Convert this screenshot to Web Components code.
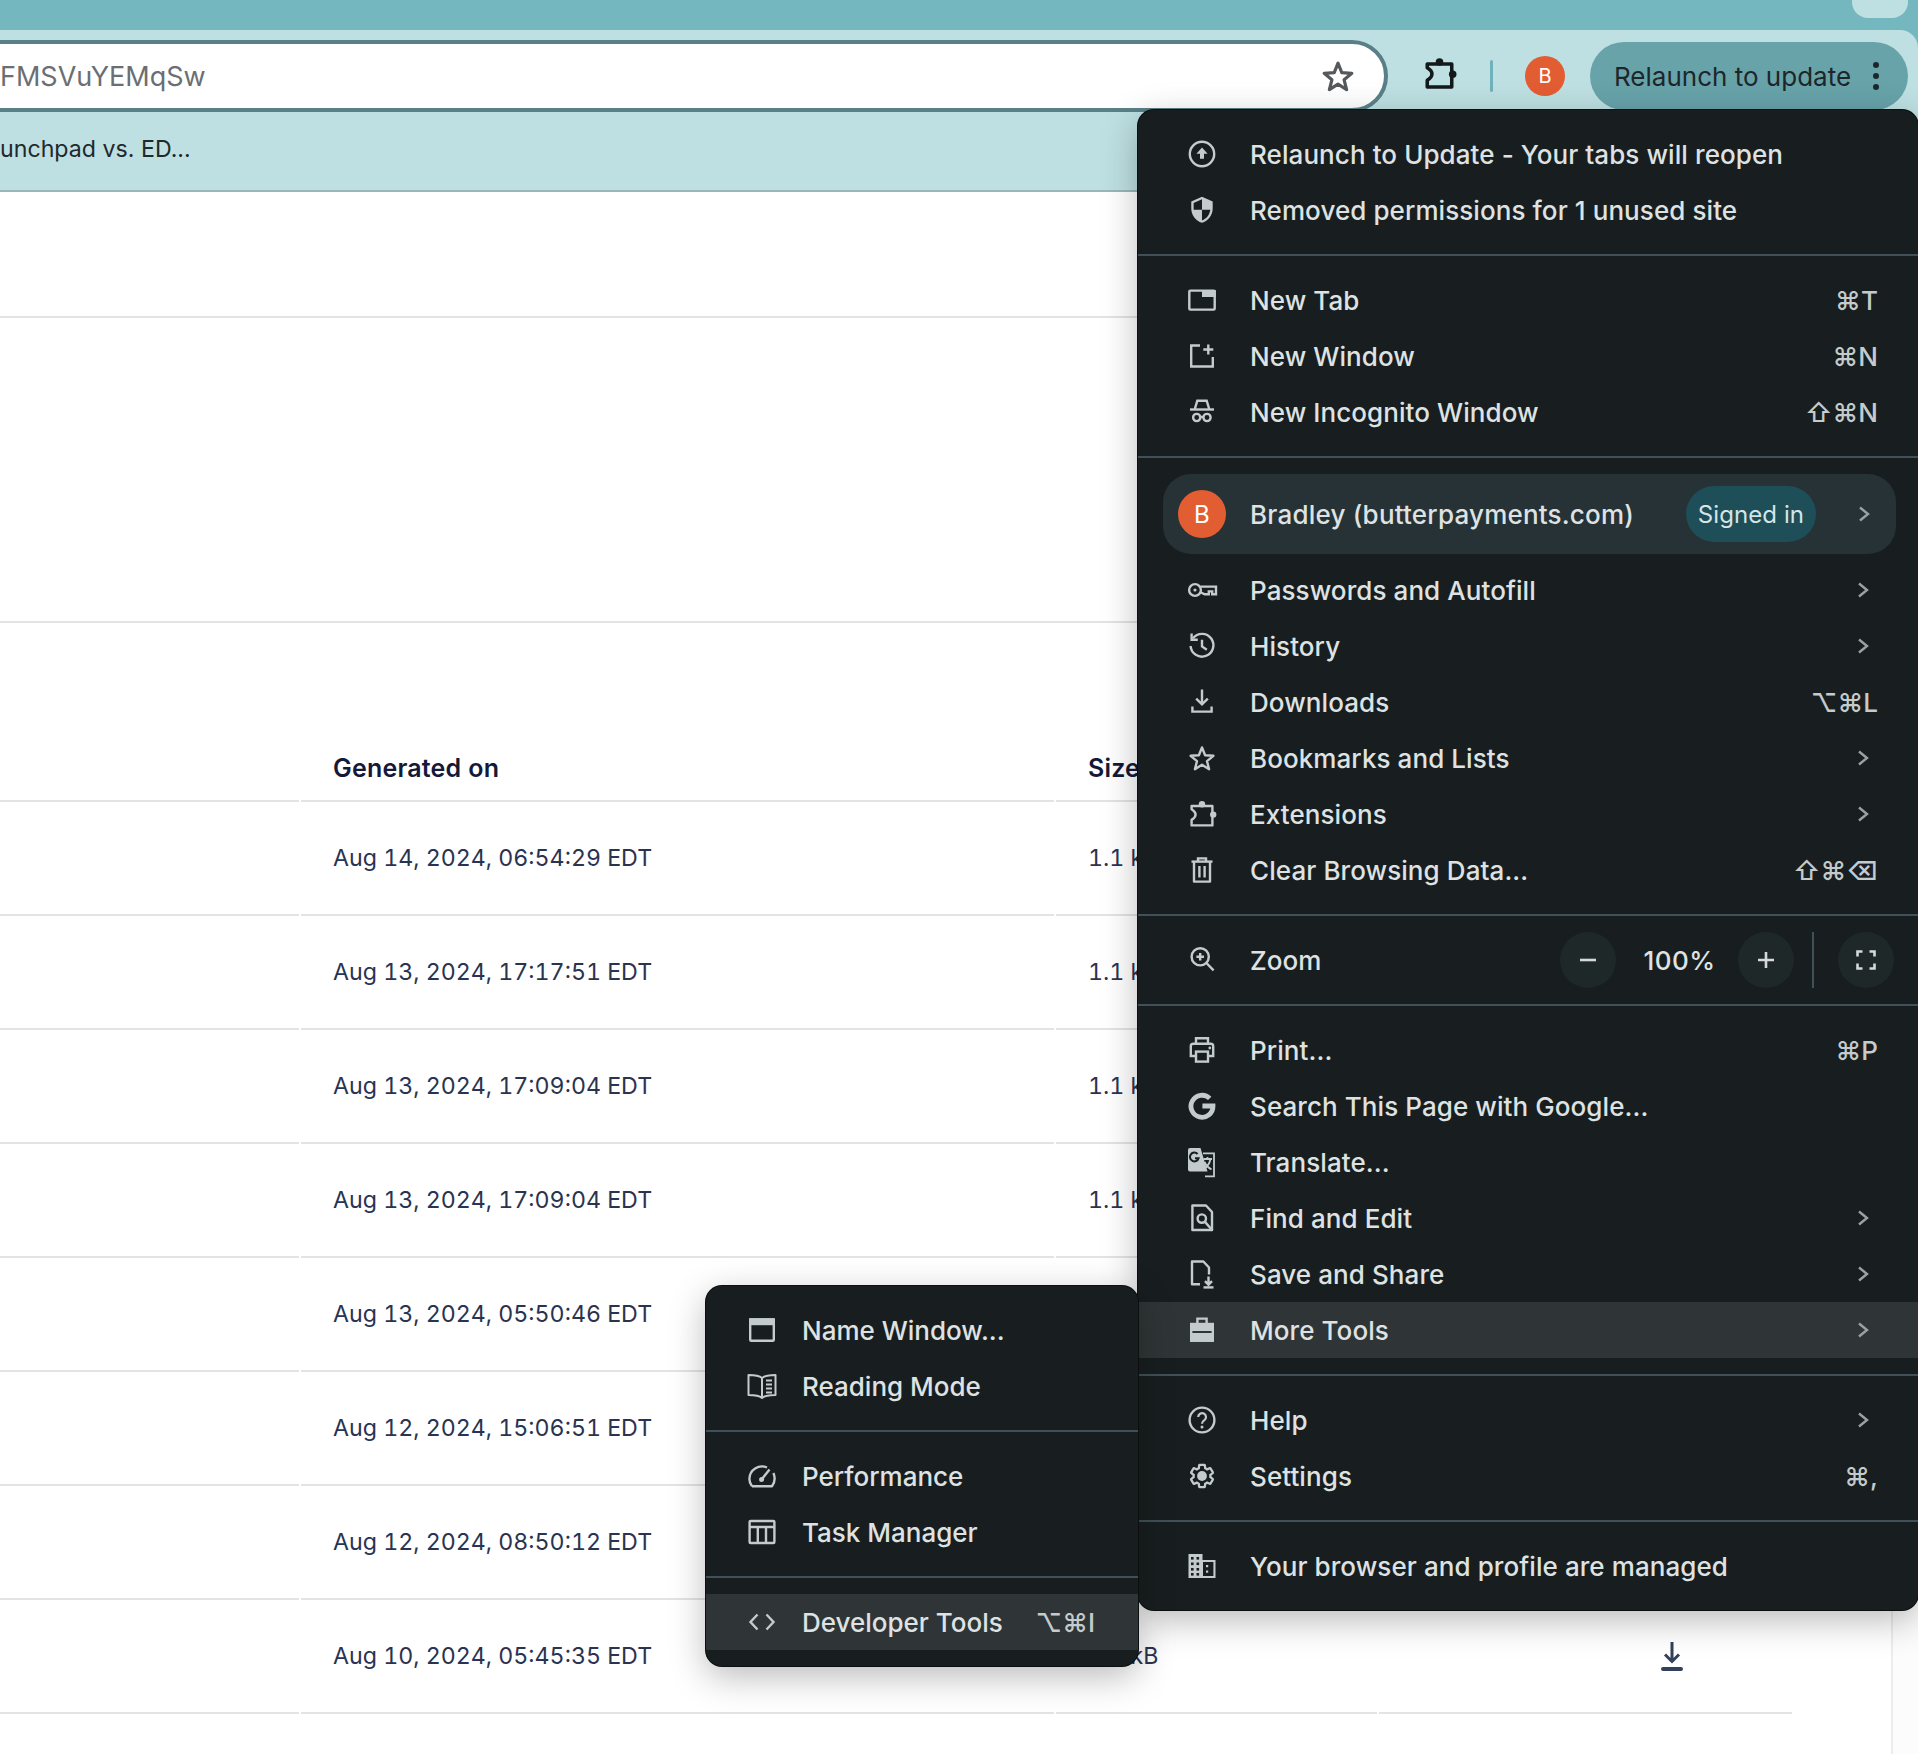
<!DOCTYPE html>
<html>
<head>
<meta charset="utf-8">
<title>Reports</title>
<style>
html, body { margin: 0; height: 100%; background: #fff; overflow: hidden; }
body { font-family: Inter, "Liberation Sans", sans-serif; }
</style>
</head>
<body>
<app-page>
  <browser-bar url="FMSVuYEMqSw" bookmark="unchpad vs. ED..." slot="bar"></browser-bar>
  <report-table slot="content">
    <report-row head generated="Generated on" size="Size"></report-row>
    <report-row generated="Aug 14, 2024, 06:54:29 EDT" size="1.1 kB"></report-row>
    <report-row generated="Aug 13, 2024, 17:17:51 EDT" size="1.1 kB"></report-row>
    <report-row generated="Aug 13, 2024, 17:09:04 EDT" size="1.1 kB"></report-row>
    <report-row generated="Aug 13, 2024, 17:09:04 EDT" size="1.1 kB"></report-row>
    <report-row generated="Aug 13, 2024, 05:50:46 EDT" size="1.1 kB"></report-row>
    <report-row generated="Aug 12, 2024, 15:06:51 EDT" size="1.1 kB"></report-row>
    <report-row generated="Aug 12, 2024, 08:50:12 EDT" size="1.1 kB"></report-row>
    <report-row generated="Aug 10, 2024, 05:45:35 EDT" size="1.1 kB"></report-row>
  </report-table>

  <chrome-menu slot="overlay" class="main">
    <menu-group>
      <menu-row icon="relaunch">Relaunch to Update - Your tabs will reopen</menu-row>
      <menu-row icon="shield">Removed permissions for 1 unused site</menu-row>
    </menu-group>
    <menu-group>
      <menu-row icon="newtab" keys="⌘T">New Tab</menu-row>
      <menu-row icon="newwindow" keys="⌘N">New Window</menu-row>
      <menu-row icon="incognito" keys="⇧⌘N">New Incognito Window</menu-row>
    </menu-group>
    <menu-group>
      <menu-profile initial="B" badge="Signed in">Bradley (butterpayments.com)</menu-profile>
      <menu-row icon="key" arrow>Passwords and Autofill</menu-row>
      <menu-row icon="history" arrow>History</menu-row>
      <menu-row icon="download" keys="⌥⌘L">Downloads</menu-row>
      <menu-row icon="star" arrow>Bookmarks and Lists</menu-row>
      <menu-row icon="puzzle" arrow>Extensions</menu-row>
      <menu-row icon="trash" keys="⇧⌘⌫">Clear Browsing Data...</menu-row>
    </menu-group>
    <menu-group>
      <menu-zoom level="100%">Zoom</menu-zoom>
    </menu-group>
    <menu-group>
      <menu-row icon="print" keys="⌘P">Print...</menu-row>
      <menu-row icon="google">Search This Page with Google...</menu-row>
      <menu-row icon="translate">Translate...</menu-row>
      <menu-row icon="find" arrow>Find and Edit</menu-row>
      <menu-row icon="save" arrow>Save and Share</menu-row>
      <menu-row icon="tools" arrow active>More Tools</menu-row>
    </menu-group>
    <menu-group>
      <menu-row icon="help" arrow>Help</menu-row>
      <menu-row icon="settings" keys="⌘,">Settings</menu-row>
    </menu-group>
    <menu-group>
      <menu-row icon="managed">Your browser and profile are managed</menu-row>
    </menu-group>
  </chrome-menu>

  <chrome-menu slot="overlay" class="sub">
    <menu-group>
      <menu-row icon="window">Name Window...</menu-row>
      <menu-row icon="reading">Reading Mode</menu-row>
    </menu-group>
    <menu-group>
      <menu-row icon="performance">Performance</menu-row>
      <menu-row icon="taskmanager">Task Manager</menu-row>
    </menu-group>
    <menu-group>
      <menu-row icon="code" keys="⌥⌘I" active>Developer Tools</menu-row>
    </menu-group>
  </chrome-menu>
</app-page>

<script>
/* global HTMLElement */

// Icon bodies, all on a 28x28 box. Stroke is the default, .f means filled
const ICONS = {
  relaunch: '<circle cx="14" cy="14" r="12.2"/><path class="f" d="M14 7.5l5.6 6.2h-3.6v5h-4v-5H8.4z"/>',
  shield: '<g transform="translate(-.3 -.5) scale(1.19)"><path class="f" fill-rule="evenodd" d="M12 1L3 5v6c0 5.55 3.84 10.74 9 12 5.16-1.26 9-6.45 9-12V5l-9-4zm0 10.99h7c-.53 4.12-3.28 7.79-7 8.94V12H5V6.3l7-3.11v8.8z"/></g>',
  newtab: '<rect x="1.3" y="4.6" width="25.4" height="19" rx="1"/><rect class="f" x="14" y="4" width="13.8" height="7"/>',
  newwindow: '<path d="M12 3.5H3.2v21h21.6V15"/><path d="M20.3 2.5v10M15.3 7.5h10"/>',
  incognito: '<path d="M2 11.5h24"/><path d="M6.8 11L9.3 2.8h9.4l2.5 8.2"/><circle cx="8.7" cy="19.5" r="3.6"/><circle cx="19" cy="19.5" r="3.6"/><path d="M12.3 19h3.1"/>',
  key: '<circle cx="7" cy="14" r="5.9"/><circle class="f" cx="7" cy="14" r="1.6"/><path d="M12.6 10.6H28v7.6h-3.8v-2.8h-3.4v2.8h-4.2l-4-2"/>',
  history: '<path d="M5 6.2A11.4 11.4 0 1 1 2.6 14"/><path d="M3.6 1.6v6.2h6.2"/><path d="M14 7.8v6.6l4.8 3.4"/>',
  download: '<path d="M14 1.5V16M8.2 10.6l5.8 5.8 5.8-5.8"/><path d="M4.4 18.6v5h19.2v-5"/>',
  star: '<path stroke-linejoin="round" d="M14 3.4l3.1 7.8 8.3.6-6.4 5.3 2.100 8.100-7.100-4.500-7.100 4.500 2.100-8.100-6.400-5.300 8.300-.6z"/>',
  puzzle: '<path stroke-linejoin="round" d="M3.6 6h20.8v19.4H3.6v-5.6q4-2.4 4-5.3t-4-5.3z"/><circle class="f" cx="14" cy="4.2" r="3.2"/><circle class="f" cx="25.2" cy="14.6" r="3.2"/>',
  trash: '<path d="M3.5 5.6h21"/><path d="M10 5V2.4h8V5"/><path stroke-linejoin="round" d="M6 6v19.6h16V6"/><path d="M11.4 10v11.5M16.6 10v11.5"/>',
  zoom: '<circle cx="12.2" cy="10.8" r="8.6"/><path d="M18.4 17l7.2 7.4"/><path d="M12.2 7v7.6M8.4 10.8H16"/>',
  print: '<path d="M8 7.5V2.2h12v5.3"/><path d="M8 20H2.8v-9.8q0-2.4 2.4-2.4h17.6q2.4 0 2.4 2.4V20H20"/><rect x="8" y="15.6" width="12" height="10"/><circle class="f" cx="21.8" cy="12" r="1.4"/>',
  google: '<path style="stroke-width:4.8" d="M21.7 6.4A11 11 0 1 0 25 14H14.4"/>',
  translate: '<path class="f" d="M2 0h10.5l7 23.5H2q-2 0-2-2V2q0-2 2-2z"/><path class="d" style="stroke-width:2" d="M9.6 6a4.4 4.4 0 1 0 1 4.2H7"/><path style="stroke-width:1.8" d="M15 5.4h11v23H17"/><path style="stroke-width:1.8" d="M15.5 11h8.5M19.5 9v2M22.4 11c-.8 4.5-3.4 8-6.5 9.6M16.5 14c1.4 3 4 6 7 7.4"/>',
  find: '<path stroke-linejoin="round" d="M18 1.5H4.4V26H24V8z"/><circle cx="13.8" cy="14.6" r="4.2"/><path d="M16.8 17.6L24.5 26.5"/>',
  save: '<path stroke-linejoin="round" d="M12 24.2H4V1.5h11.4L21 7.5v7"/><path d="M20.5 16.5v8M17 21.2l3.5 3.5 3.5-3.5"/><path d="M15.5 27.4h10"/>',
  tools: '<path d="M9.4 7V2.6h9.2V7"/><rect x="3.2" y="8" width="21.6" height="16.6"/><rect class="f" x="2" y="7" width="24" height="8"/><rect class="f" x="2" y="17" width="24" height="8.800"/>',
  help: '<circle cx="14" cy="14" r="12.4"/><path style="stroke-width:2.2" d="M10.2 11a3.9 3.9 0 1 1 6.2 3.2c-1.6 1.1-2.4 1.8-2.4 3.6"/><circle class="f" cx="14" cy="21" r="1.5"/>',
  settings: '<g transform="scale(1.1667)"><path style="stroke-width:2" d="M19.14 12.94c.04-.3.06-.61.06-.94 0-.32-.02-.64-.07-.94l2.03-1.58c.18-.14.23-.41.12-.61l-1.92-3.32c-.12-.22-.37-.29-.59-.22l-2.39.96c-.5-.38-1.03-.7-1.62-.94l-.36-2.54c-.04-.24-.24-.41-.48-.41h-3.84c-.24 0-.43.17-.47.41l-.36 2.54c-.59.24-1.13.57-1.62.94l-2.39-.96c-.22-.08-.47 0-.59.22L2.74 8.87c-.12.21-.08.47.12.61l2.03 1.58c-.05.3-.09.63-.09.94s.02.64.07.94l-2.03 1.58c-.18.14-.23.41-.12.61l1.92 3.32c.12.22.37.29.59.22l2.39-.96c.5.38 1.03.7 1.62.94l.36 2.54c.05.24.24.41.48.41h3.84c.24 0 .44-.17.47-.41l.36-2.54c.59-.24 1.13-.56 1.62-.94l2.39.96c.22.08.47 0 .59-.22l1.92-3.32c.12-.22.07-.47-.12-.61l-2.01-1.58z"/><circle class="f" cx="12" cy="12" r="4.2"/></g>',
  managed: '<path class="f" d="M.5 2h14v6h13v18H.5z"/><g class="dk"><rect x="3" y="5" width="2.6" height="2.6"/><rect x="8.5" y="5" width="2.6" height="2.6"/><rect x="3" y="10.5" width="2.6" height="2.6"/><rect x="8.5" y="10.5" width="2.6" height="2.6"/><rect x="3" y="16" width="2.6" height="2.6"/><rect x="8.5" y="16" width="2.6" height="2.6"/><rect x="3" y="21" width="2.6" height="2.6"/><rect x="8.5" y="21" width="2.6" height="2.6"/><rect x="15" y="10" width="10.4" height="14"/></g><rect class="f" x="18" y="13" width="2.2" height="2.2"/><rect class="f" x="18" y="18.5" width="2.2" height="2.2"/>',
  window: '<rect x="2.2" y="3.4" width="23.6" height="21.4" rx="1"/><rect class="f" x="1" y="2.2" width="26" height="7"/>',
  reading: '<path style="stroke-width:2" stroke-linejoin="round" d="M14 6C11 3.4 6 3 .5 3v20c5.500 0 10.500.2 13.500 3 3-2.800 8-3 13.500-3V3C22 3 17 3.400 14 6zM14 6v20"/><path style="stroke-width:2" d="M18 8.500h6M18 12.500h6M18 16.500h6M18 20.500h6"/>',
  performance: '<path stroke-linejoin="round" d="M4 24.200C2.400 22.200 1.400 19.700 1.400 17A12.600 12.600 0 0 1 19 5.500"/><path stroke-linejoin="round" d="M25.400 11A12.600 12.600 0 0 1 26.600 17c0 2.700-1 5.200-2.600 7.200H4"/><path d="M13.600 17.400L21.500 7.500"/><circle class="f" cx="13.600" cy="17.400" r="2.500"/>',
  taskmanager: '<rect x="1.600" y="3" width="24.800" height="22" rx="1"/><path d="M1.600 9h24.800M9.800 9v16M18 9v16"/>',
  code: '<path d="M9.500 6.500L2.500 14l7 7.500M18.500 6.500l7 7.500-7 7.500"/>'
}

const ICON_STYLE = `
svg { display: block; width: 100%; height: 100%; overflow: visible; }
svg * { fill: none; stroke: currentColor; stroke-width: 2.4; }
svg .f { fill: currentColor; stroke: none; }
svg .d { stroke: #181e1f; }
svg .dk rect { fill: #181e1f; stroke: none; }
`

function iconSvg (name) {
  return '<svg viewBox="0 0 28 28" aria-hidden="true">' + (ICONS[name] || '') + '</svg>'
}

function scopedIconStyle () {
  return ICON_STYLE.replace(/svg \*/g, '#icon svg *').replace(/svg \./g, '#icon svg .').replace('svg {', '#icon svg {')
}

const CHEVRON = '<svg viewBox="0 0 10 14"><path d="M1 .5l8 6.500-8 6.500"/></svg>'

const pageTemplate = document.createElement('template')
pageTemplate.innerHTML = `
<style>
:host {
  display: flex;
  flex-direction: column;
  position: relative;
  width: 1918px;
  height: 1754px;
  overflow: hidden;
  background: #fff;
}
#body { display: flex; flex: 1; min-height: 0; }
#main { flex: 1; min-width: 0; }
#track { width: 25px; border-left: 2px solid #ececec; background: #fcfcfc; }
</style>
<slot name="bar"></slot>
<div id="body">
  <div id="main"><slot name="content"></slot></div>
  <div id="track"></div>
</div>
<slot name="overlay"></slot>`

class AppPage extends HTMLElement {
  constructor () {
    super()
    this.attachShadow({ mode: 'open' }).appendChild(pageTemplate.content.cloneNode(true))
  }
}

const barTemplate = document.createElement('template')
barTemplate.innerHTML = `
<style>
:host { display: block; font-family: Inter, "Liberation Sans", sans-serif; background: #74b7be; position: relative; }
#tab {
  position: absolute; top: 0; right: 10px; width: 56px; height: 18px;
  background: #bee0e2; border-radius: 0 0 16px 16px;
}
#strip { height: 30px; }
#toolbar {
  height: 82px;
  box-sizing: border-box;
  padding-top: 10px;
  display: flex;
  align-items: flex-start;
  background: #bee0e2;
  border-top-right-radius: 18px;
}
#address {
  flex: 1;
  height: 72px;
  box-sizing: border-box;
  margin-left: -40px;
  padding: 0 29px 0 36px;
  display: flex;
  align-items: center;
  justify-content: space-between;
  background: #fff;
  border: 4px solid #5a8087;
  border-radius: 36px;
  color: #6b6e72;
  font-size: 27px;
}
#puzzle { width: 33px; height: 33px; margin: 17px 0 0 35px; color: #13191b; }
#sep { width: 3px; height: 32px; margin: 20px 0 0 34px; border-radius: 2px; background: #70b2ba; }
#avatar {
  width: 40px; height: 40px; margin: 16px 0 0 32px; border-radius: 50%;
  background: #e35d33; color: #fff; font-size: 20px;
  display: flex; align-items: center; justify-content: center;
}
#relaunch {
  width: 318px; height: 68px; box-sizing: border-box; margin: 2px 10px 0 25px;
  padding: 0 29px 0 24px; border-radius: 34px;
  background: #68a3aa; color: #1d272b; font-size: 26px;
  display: flex; align-items: center; justify-content: space-between;
}
#dots { display: flex; flex-direction: column; gap: 5px; }
#dots i { width: 6px; height: 6px; border-radius: 50%; background: #1d272b; }
#bookmarks {
  height: 80px;
  box-sizing: border-box;
  display: flex;
  align-items: center;
  padding-bottom: 4px;
  background: #bee0e2;
  border-bottom: 2px solid #9ab6ba;
  color: #22282b;
  font-size: 23.200px;
}
</style>
<div id="tab"></div>
<div id="strip"></div>
<div id="toolbar">
  <div id="address"><span id="url"></span><span id="star"></span></div>
  <div id="puzzle"></div>
  <div id="sep"></div>
  <div id="avatar">B</div>
  <div id="relaunch"><span>Relaunch to update</span><span id="dots"><i></i><i></i><i></i></span></div>
</div>
<div id="bookmarks"><span id="mark"></span></div>`

class BrowserBar extends HTMLElement {
  constructor () {
    super()
    this.shadow = this.attachShadow({ mode: 'open' })
    this.shadow.appendChild(barTemplate.content.cloneNode(true))
  }

  connectedCallback () {
    this.shadow.getElementById('url').textContent = this.getAttribute('url')
    this.shadow.getElementById('mark').textContent = this.getAttribute('bookmark')
    const star = this.shadow.getElementById('star')
    star.attachShadow({ mode: 'open' }).innerHTML = '<style>' + ICON_STYLE + ':host{display:block;width:34px;height:34px;color:#55595c}svg *{stroke-width:2.600}</style>' + iconSvg('star')
    const puzzle = this.shadow.getElementById('puzzle')
    puzzle.attachShadow({ mode: 'open' }).innerHTML = '<style>' + ICON_STYLE + 'svg *{stroke-width:3}</style>' + iconSvg('puzzle')
  }
}

const tableTemplate = document.createElement('template')
tableTemplate.innerHTML = `
<style>
:host { display: block; width: 1792px; font-family: Inter, "Liberation Sans", sans-serif; }
.blank { border-bottom: 2px solid #e3e3e3; }
#a { height: 124px; }
#b { height: 303px; }
</style>
<div class="blank" id="a"></div>
<div class="blank" id="b"></div>
<slot></slot>`

class ReportTable extends HTMLElement {
  constructor () {
    super()
    this.attachShadow({ mode: 'open' }).appendChild(tableTemplate.content.cloneNode(true))
  }
}

const rowTemplate = document.createElement('template')
rowTemplate.innerHTML = `
<style>
:host {
  display: grid;
  grid-template-columns: 299px 753px 321px 1fr;
  column-gap: 2px;
  color: #2a3350;
  font-size: 23.200px;
  font-variant-numeric: tabular-nums;
}
.cell {
  height: 112px;
  display: flex;
  align-items: center;
  border-bottom: 2px solid #e3e3e3;
}
.text { padding-left: 32px; }
:host([head]) .cell { height: 177px; align-items: flex-end; color: #14193a; font-weight: 600; font-size: 25px; letter-spacing: .2px; }
:host([head]) span { padding-bottom: 17px; }
#act { padding-left: 281px; color: #33415c; }
#act svg { display: block; width: 24px; height: 30px; }
:host([head]) #act svg { display: none; }
</style>
<div class="cell"></div>
<div class="cell text"><span id="generated"></span></div>
<div class="cell text"><span id="size"></span></div>
<div class="cell" id="act">
  <svg viewBox="0 0 24 30" fill="none" stroke="currentColor" stroke-width="3"><path d="M12 1v19M5 13.500l7 7 7-7"/><path stroke-linecap="round" stroke-width="4" d="M3 28h18"/></svg>
</div>`

class ReportRow extends HTMLElement {
  constructor () {
    super()
    this.shadow = this.attachShadow({ mode: 'open' })
    this.shadow.appendChild(rowTemplate.content.cloneNode(true))
  }

  connectedCallback () {
    this.shadow.getElementById('generated').textContent = this.getAttribute('generated')
    this.shadow.getElementById('size').textContent = this.getAttribute('size')
  }
}

const menuTemplate = document.createElement('template')
menuTemplate.innerHTML = `
<style>
:host {
  display: block;
  position: absolute;
  box-sizing: border-box;
  background: #181e1f;
  color: #dfe2e3;
  border-radius: 16px;
  box-shadow: 0 10px 36px rgba(0, 0, 0, 0.28), 0 0 0 1px #0d1213;
  font-family: Inter, "Liberation Sans", sans-serif;
  font-size: 26px;
  font-weight: 550;
  letter-spacing: .08px;
  --pad-left: 50px;
  --pad-right: 40px;
  --icon-gap: 34px;
}
:host(.main) { left: 1138px; top: 110px; width: 780px; z-index: 1; }
:host(.sub) {
  left: 706px; top: 1286px; width: 432px; z-index: 2;
  letter-spacing: 0;
  --pad-left: 42px;
  --pad-right: 43px;
  --icon-gap: 26px;
}
</style>
<slot></slot>`

class ChromeMenu extends HTMLElement {
  constructor () {
    super()
    this.attachShadow({ mode: 'open' }).appendChild(menuTemplate.content.cloneNode(true))
  }
}

const groupTemplate = document.createElement('template')
groupTemplate.innerHTML = `
<style>
:host { display: block; padding: 16px 0; border-bottom: 2px solid #3f5156; }
:host(:last-child) { border-bottom: 0; }
</style>
<slot></slot>`

class MenuGroup extends HTMLElement {
  constructor () {
    super()
    this.attachShadow({ mode: 'open' }).appendChild(groupTemplate.content.cloneNode(true))
  }
}

const menuRowTemplate = document.createElement('template')
menuRowTemplate.innerHTML = `
<style>
:host {
  display: flex;
  align-items: center;
  height: 56px;
  padding: 0 var(--pad-right) 0 var(--pad-left);
  white-space: nowrap;
}
:host([active]) { background: #2f3536; }
#icon { width: 28px; height: 28px; flex: none; margin-right: var(--icon-gap); color: #c4cbcc; }
#label { flex: 1; }
#keys { color: #c4cbcc; font-family: Inter, "DejaVu Sans", sans-serif; }
#arrow { display: none; width: 10px; height: 14px; margin-right: 10px; color: #9ca1a2; }
:host([arrow]) #arrow { display: block; }
#arrow path { fill: none; stroke: currentColor; stroke-width: 2.400; }
#arrow svg { display: block; overflow: visible; }
${scopedIconStyle()}
</style>
<div id="icon"></div>
<div id="label"><slot></slot></div>
<div id="keys"></div>
<div id="arrow">${CHEVRON}</div>`

class MenuRow extends HTMLElement {
  constructor () {
    super()
    this.shadow = this.attachShadow({ mode: 'open' })
    this.shadow.appendChild(menuRowTemplate.content.cloneNode(true))
  }

  connectedCallback () {
    this.shadow.getElementById('icon').innerHTML = iconSvg(this.getAttribute('icon'))
    this.shadow.getElementById('keys').textContent = this.getAttribute('keys') || ''
  }
}

const profileTemplate = document.createElement('template')
profileTemplate.innerHTML = `
<style>
:host {
  display: flex;
  align-items: center;
  height: 80px;
  margin: 0 22px 8px 25px;
  padding: 0 27px 0 15px;
  border-radius: 28px;
  background: #263235;
  white-space: nowrap;
}
#avatar {
  width: 48px; height: 48px; flex: none; margin-right: 24px; border-radius: 50%;
  background: #e35d33; color: #fff; font-weight: 400; font-size: 24px;
  display: flex; align-items: center; justify-content: center;
}
#name { flex: 1; letter-spacing: .2px; }
#badge {
  height: 56px; width: 130px; margin-right: 43px; border-radius: 28px;
  background: #1e4e57; color: #d5e4e6; font-weight: 400; font-size: 24px;
  display: flex; align-items: center; justify-content: center;
}
#arrow { width: 10px; height: 14px; margin-right: 0; color: #9ca1a2; }
#arrow path { fill: none; stroke: currentColor; stroke-width: 2.400; }
#arrow svg { display: block; overflow: visible; }
</style>
<div id="avatar"></div>
<div id="name"><slot></slot></div>
<div id="badge"></div>
<div id="arrow">${CHEVRON}</div>`

class MenuProfile extends HTMLElement {
  constructor () {
    super()
    this.shadow = this.attachShadow({ mode: 'open' })
    this.shadow.appendChild(profileTemplate.content.cloneNode(true))
  }

  connectedCallback () {
    this.shadow.getElementById('avatar').textContent = this.getAttribute('initial')
    this.shadow.getElementById('badge').textContent = this.getAttribute('badge')
  }
}

const zoomTemplate = document.createElement('template')
zoomTemplate.innerHTML = `
<style>
:host {
  display: flex;
  align-items: center;
  height: 56px;
  padding: 0 24px 0 var(--pad-left);
  white-space: nowrap;
}
#icon { width: 28px; height: 28px; margin-right: var(--icon-gap); color: #c4cbcc; }
#label { flex: 1; }
.round {
  width: 56px; height: 56px; border-radius: 50%; background: #1f2829; color: #d5d9da;
  display: flex; align-items: center; justify-content: center;
}
.round svg { display: block; width: 20px; height: 20px; fill: none; stroke: currentColor; stroke-width: 2.600; }
#level { width: 117px; padding-left: 5px; text-align: center; letter-spacing: .5px; }
#sep { width: 2px; height: 56px; margin: 0 24px 0 18px; background: #3f5156; }
${scopedIconStyle()}
</style>
<div id="icon"></div>
<div id="label"><slot></slot></div>
<div class="round"><svg viewBox="0 0 20 20"><path d="M2 10h16"/></svg></div>
<div id="level"></div>
<div class="round"><svg viewBox="0 0 20 20"><path d="M2 10h16M10 2v16"/></svg></div>
<div id="sep"></div>
<div class="round"><svg viewBox="0 0 20 20"><path d="M1.500 6.500v-5h5M13.500 1.500h5v5M18.500 13.500v5h-5M6.500 18.500h-5v-5"/></svg></div>`

class MenuZoom extends HTMLElement {
  constructor () {
    super()
    this.shadow = this.attachShadow({ mode: 'open' })
    this.shadow.appendChild(zoomTemplate.content.cloneNode(true))
  }

  connectedCallback () {
    this.shadow.getElementById('icon').innerHTML = iconSvg('zoom')
    this.shadow.getElementById('level').textContent = this.getAttribute('level')
  }
}

window.customElements.define('app-page', AppPage)
window.customElements.define('browser-bar', BrowserBar)
window.customElements.define('report-table', ReportTable)
window.customElements.define('report-row', ReportRow)
window.customElements.define('chrome-menu', ChromeMenu)
window.customElements.define('menu-group', MenuGroup)
window.customElements.define('menu-row', MenuRow)
window.customElements.define('menu-profile', MenuProfile)
window.customElements.define('menu-zoom', MenuZoom)
</script>
</body>
</html>
